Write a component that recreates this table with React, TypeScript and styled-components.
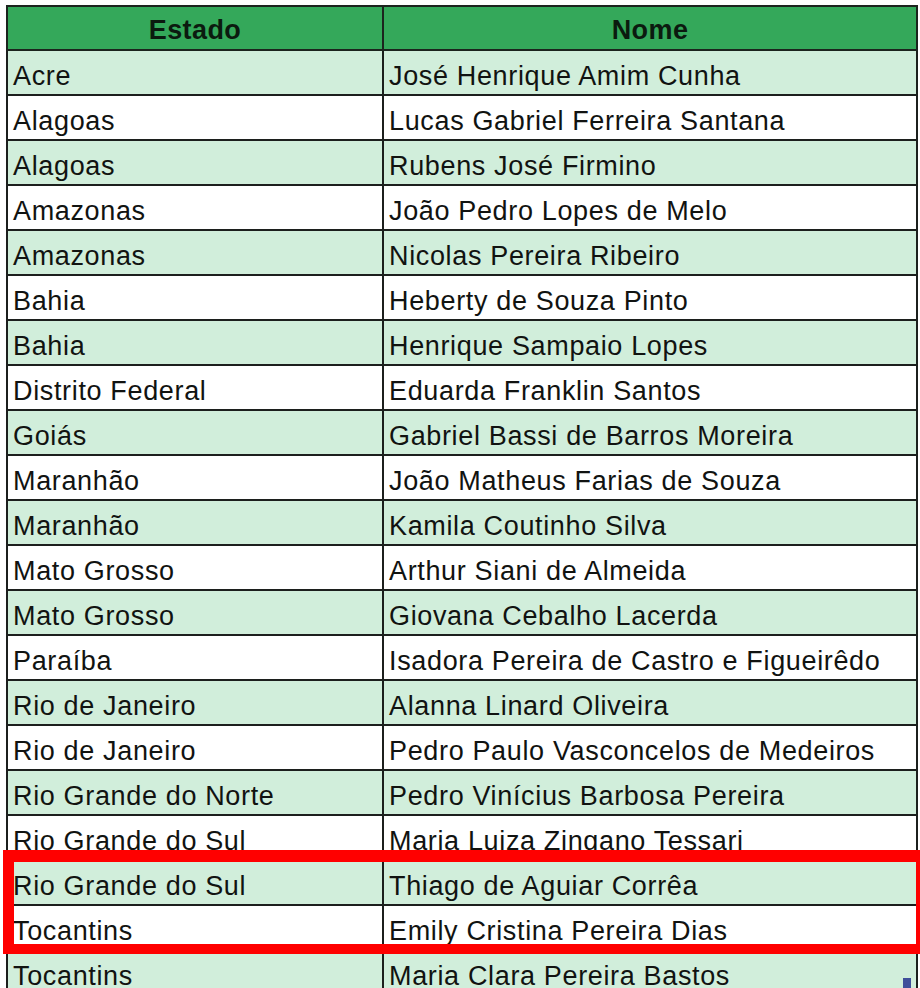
import React from 'react'
import styled, { createGlobalStyle } from 'styled-components'

const GlobalStyle = createGlobalStyle`
  html, body {
    margin: 0;
    padding: 0;
    background: #ffffff;
    overflow: hidden;
  }
`

const Sheet = styled.div`
  position: relative;
  width: 920px;
  height: 988px;
  box-sizing: border-box;
  padding: 5px 0 0 6px;
  font-family: "Liberation Sans", Arial, sans-serif;
`

const Table = styled.table`
  border-collapse: collapse;
  table-layout: fixed;
  width: 910px;
`

const HeadCell = styled.th<{ $width: number }>`
  width: ${p => p.$width}px;
  height: 44px;
  padding: 0 0 5px;
  background: #34a85a;
  border: 2px solid #1c241e;
  color: #0b1a0f;
  font-size: 27px;
  letter-spacing: 0.4px;
  font-weight: 700;
  text-align: center;
  vertical-align: bottom;
  line-height: 1;
  box-sizing: border-box;
`

const Row = styled.tr<{ $shaded: boolean }>`
  background: ${p => (p.$shaded ? '#d1eedb' : '#ffffff')};
`

const Cell = styled.td`
  height: 45px;
  padding: 0 0 4px 5px;
  border: 2px solid #1c1f1d;
  color: #111311;
  font-size: 27px;
  letter-spacing: 0.65px;
  line-height: 1;
  vertical-align: bottom;
  white-space: nowrap;
  overflow: hidden;
  box-sizing: border-box;
`

const Highlight = styled.div`
  position: absolute;
  left: 3px;
  top: 850px;
  width: 924px;
  height: 104px;
  box-sizing: border-box;
  border: 11px solid #ff0000;
  border-top-width: 12px;
  border-bottom-width: 10px;
  pointer-events: none;
`

const FillHandle = styled.div`
  position: absolute;
  left: 903px;
  top: 978px;
  width: 8px;
  height: 10px;
  background: #3f4f9a;
`

const rows: [string, string][] = [
  ['Acre', 'José Henrique Amim Cunha'],
  ['Alagoas', 'Lucas Gabriel Ferreira Santana'],
  ['Alagoas', 'Rubens José Firmino'],
  ['Amazonas', 'João Pedro Lopes de Melo'],
  ['Amazonas', 'Nicolas Pereira Ribeiro'],
  ['Bahia', 'Heberty de Souza Pinto'],
  ['Bahia', 'Henrique Sampaio Lopes'],
  ['Distrito Federal', 'Eduarda Franklin Santos'],
  ['Goiás', 'Gabriel Bassi de Barros Moreira'],
  ['Maranhão', 'João Matheus Farias de Souza'],
  ['Maranhão', 'Kamila Coutinho Silva'],
  ['Mato Grosso', 'Arthur Siani de Almeida'],
  ['Mato Grosso', 'Giovana Cebalho Lacerda'],
  ['Paraíba', 'Isadora Pereira de Castro e Figueirêdo'],
  ['Rio de Janeiro', 'Alanna Linard Oliveira'],
  ['Rio de Janeiro', 'Pedro Paulo Vasconcelos de Medeiros'],
  ['Rio Grande do Norte', 'Pedro Vinícius Barbosa Pereira'],
  ['Rio Grande do Sul', 'Maria Luiza Zingano Tessari'],
  ['Rio Grande do Sul', 'Thiago de Aguiar Corrêa'],
  ['Tocantins', 'Emily Cristina Pereira Dias'],
  ['Tocantins', 'Maria Clara Pereira Bastos'],
]

const App: React.FunctionComponent = () => {
  return (
    <Sheet>
      <GlobalStyle />
      <Table>
        <thead>
          <tr>
            <HeadCell $width={376}>Estado</HeadCell>
            <HeadCell $width={534}>Nome</HeadCell>
          </tr>
        </thead>
        <tbody>
          {rows.map(([estado, nome], i) => (
            <Row key={i} $shaded={i % 2 === 0}>
              <Cell>{estado}</Cell>
              <Cell>{nome}</Cell>
            </Row>
          ))}
        </tbody>
      </Table>
      <Highlight />
      <FillHandle />
    </Sheet>
  )
}

export default App
